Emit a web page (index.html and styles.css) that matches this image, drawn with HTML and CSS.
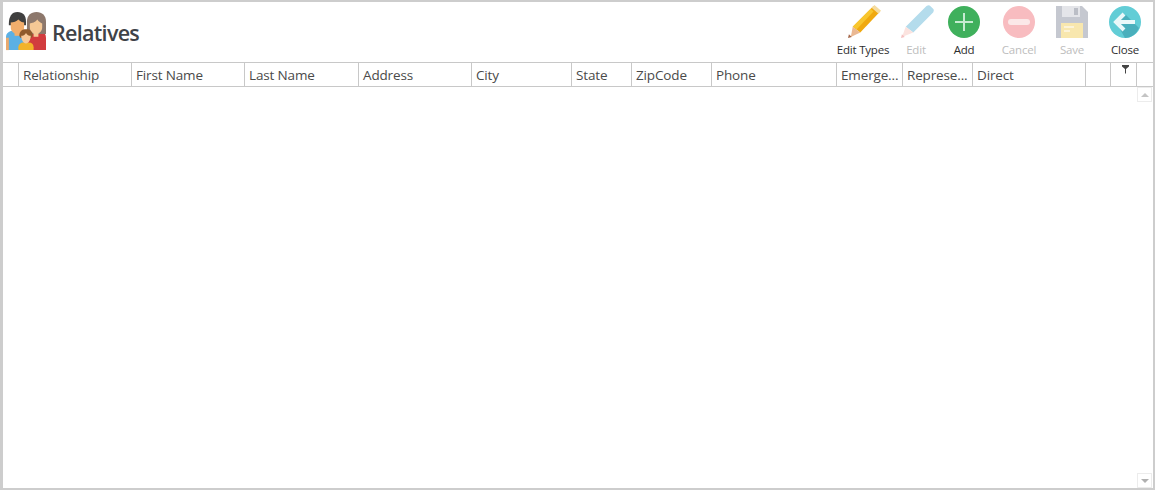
FILE: index.html
```html
<!DOCTYPE html>
<html lang="en">
<head>
<meta charset="utf-8">
<title>Relatives</title>
<link rel="stylesheet" href="styles.css">
</head>
<body>
<div class="window">
  <header class="topbar">
    <div class="title">
      <svg class="family" width="40" height="40" viewBox="0 0 42 42">
        <path d="M21 40V27c0-4 3-6 6-7l5-1 5 1c3 1 5 3 5 7v13H21z" fill="#d23c3e"/>
        <path d="M22 10c0-6 4-10 10-10s10 4 10 10v13H22z" fill="#8d786c"/>
        <path d="M25 12c2 0 6-1 8-4 1 2 4 4 5 4v4c0 4-3 7-6.500 7S25 20 25 16z" fill="#f5c895"/>
        <rect x="29" y="21" width="5" height="5" fill="#f5c895"/>
        <path d="M0 40V26c0-3 2-5 5-6l6-1 6 1c3 1 5 3 5 6v14H0z" fill="#5cb0e4"/>
        <path d="M0 40V27h3v13H0z" fill="#e9a96e"/>
        <path d="M3 12C3 5 6 0 12 0s9 4 9 10v4H3z" fill="#3f3f3f"/>
        <path d="M5 11c3 0 6-1 8-3 2 2 4 3 6 3v5c0 4-3 7-7 7s-7-3-7-7z" fill="#f2ae6c"/>
        <rect x="9" y="20" width="6" height="5" fill="#f2ae6c"/>
        <path d="M13 40v-3c0-3 3-5 5-5h6c3 0 5 2 5 5v3z" fill="#f3b32a"/>
        <path d="M14 25c0-5 3-7 7-7s7 2 7 7l-1 2H15z" fill="#8e5a2c"/>
        <path d="M16 25c2 0 4-1 5-3 1 2 3 3 5 3 0 4-2 8-5 8s-5-4-5-8z" fill="#f7c999"/>
      </svg>
      <h1>Relatives</h1>
    </div>
    <nav class="tools">
      <button class="tool tool-types">
        <svg class="pencil" viewBox="0 0 36 36"><path d="M27 1l7 6L13 29l-8-6z" fill="#f0a90f"/><path d="M24 4l3 3L9 26l-4-3z" fill="#f8c62e"/><path d="M25 3l3-3 7 6-3 3z" fill="#f5dca0"/><path d="M5 23l8 6-10 5z" fill="#eab893"/><path d="M1 31l3 3-4 1z" fill="#a5674a"/></svg>
        <span>Edit Types</span>
      </button>
      <button class="tool tool-edit off">
        <svg class="pencil" viewBox="0 0 36 36"><path d="M27 1c2-1 3-1 4 0l3 3c1 1 1 2 0 4L13 29l-8-6z" fill="#b4dcec"/><path d="M5 23l8 6-12 5z" fill="#fbe3df"/><path d="M1 31l3 3-4 1z" fill="#f5c1c1"/></svg>
        <span>Edit</span>
      </button>
      <button class="tool tool-add">
        <svg viewBox="0 0 32 32"><circle cx="16" cy="16" r="16" fill="#3fb05c"/><path d="M16 7v18M7 16h18" stroke="#c5ebd0" stroke-width="2"/></svg>
        <span>Add</span>
      </button>
      <button class="tool tool-cancel off">
        <svg viewBox="0 0 32 32"><circle cx="16" cy="16" r="16" fill="#f8bcc0"/><rect x="5" y="13" width="22" height="6" rx="3" fill="#fbe8e8"/></svg>
        <span>Cancel</span>
      </button>
      <button class="tool tool-save off">
        <svg viewBox="0 0 32 32"><path d="M0 0h26l6 6v26H0z" fill="#c5c8d0"/><path d="M6 0h18v11H6z" fill="#e4e5e9"/><rect x="18" y="2" width="4" height="7" fill="#bbbec6"/><rect x="5" y="17" width="22" height="15" fill="#f8e7ae"/><path d="M8 21h10M8 25h6" stroke="#fdf8e6" stroke-width="1.500"/></svg>
        <span>Save</span>
      </button>
      <button class="tool tool-close">
        <svg viewBox="0 0 32 32"><circle cx="16" cy="16" r="16" fill="#62cdd6"/><path d="M17 9l13 13a16 16 0 0 1-14 10l-9-16z" fill="#4aafbc"/><path d="M15 8l-8 8 8 8M8 16h18" fill="none" stroke="#eaf8f9" stroke-width="4"/></svg>
        <span>Close</span>
      </button>
    </nav>
  </header>
  <div class="grid-head">
    <div class="cell"></div>
    <div class="cell">Relationship</div>
    <div class="cell">First Name</div>
    <div class="cell">Last Name</div>
    <div class="cell">Address</div>
    <div class="cell">City</div>
    <div class="cell">State</div>
    <div class="cell">ZipCode</div>
    <div class="cell">Phone</div>
    <div class="cell">Emerge...</div>
    <div class="cell">Represe...</div>
    <div class="cell">Direct</div>
    <div class="cell"></div>
    <div class="cell cell-filter"><svg width="7" height="9" viewBox="0 0 7 9"><path d="M0 0h7v1.500L4 4v4.500H3V4L0 1.500z" fill="#444"/></svg></div>
    <div class="cell last"></div>
  </div>
  <div class="grid-body">
    <div class="scroll">
      <span class="arrow"><i class="tri up"></i></span>
      <span class="arrow"><i class="tri down"></i></span>
    </div>
  </div>
</div>
</body>
</html>
```
FILE: styles.css
```css
* { box-sizing: border-box; }
html, body { margin: 0; height: 100%; background: #fff; }
.window {
  height: 490px;
  border: solid #cdcdcd;
  border-width: 2px 2px 2px 3px;
  display: flex;
  flex-direction: column;
  font-family: "Open Sans", "Noto Sans", sans-serif;
  color: #444;
}
.topbar {
  height: 60px;
  display: flex;
  justify-content: space-between;
  padding-left: 3px;
  flex: none;
}
.title { display: flex; align-items: flex-start; padding-top: 10px; }
.family { flex: none; }
h1 {
  margin: 0;
  padding: 0 0 0 6px;
  font-size: 21.500px;
  line-height: 28px;
  letter-spacing: -0.7px;
  font-weight: 600;
  color: #3f4348;
  margin-top: 7px;
}
.tools { display: flex; }
.tool {
  padding: 4px 0 0;
  margin: 0;
  border: 0;
  background: none;
  font: inherit;
  font-size: 11.500px;
  letter-spacing: -0.2px;
  color: #2e2e2e;
  display: flex;
  flex-direction: column;
  align-items: center;
  height: 58px;
}
.tool svg { width: 32px; height: 32px; flex: none; margin-bottom: 4px; }
.tool svg.pencil { width: 34px; height: 34px; margin: -1px 0 3px 3px; }
.tool span { line-height: 16px; white-space: nowrap; font-weight: 400; }
.tool-types { width: 64px; }
.tool-edit { width: 42px; }
.tool-add { width: 54px; }
.tool-cancel { width: 56px; }
.tool-save { width: 50px; }
.tool-close { width: 56px; }
.off { color: #bdbdbd; }
.grid-head {
  height: 25px;
  flex: none;
  display: grid;
  grid-template-columns: 16px 113px 113px 114px 113px 100px 60px 80px 125px 66px 70px 113px 25px 26px 1fr;
  border-top: 1px solid #c8c8c8;
  border-bottom: 1px solid #c8c8c8;
  font-size: 13.500px;
  letter-spacing: -0.15px;
  color: #4a4a4a;
}
.cell {
  border-right: 1px solid #c8c8c8;
  padding-left: 4px;
  line-height: 24px;
  white-space: nowrap;
  overflow: hidden;
}
.cell.last { border-right: 0; }
.cell-filter { display: flex; justify-content: center; align-items: flex-start; padding: 2px 0 0 3px; }
.grid-body { flex: 1; display: flex; justify-content: flex-end; padding-right: 1px; }
.scroll {
  width: 15px;
  display: flex;
  flex-direction: column;
  justify-content: space-between;
}
.arrow {
  height: 15px;
  border: 1px solid #ececec;
  display: flex;
  align-items: center;
  justify-content: center;
}
.tri { width: 0; height: 0; border-left: 4px solid transparent; border-right: 4px solid transparent; }
.tri.up { border-bottom: 4px solid #c4c4c4; }
.tri.down { border-top: 4px solid #b0b0b0; }
```
